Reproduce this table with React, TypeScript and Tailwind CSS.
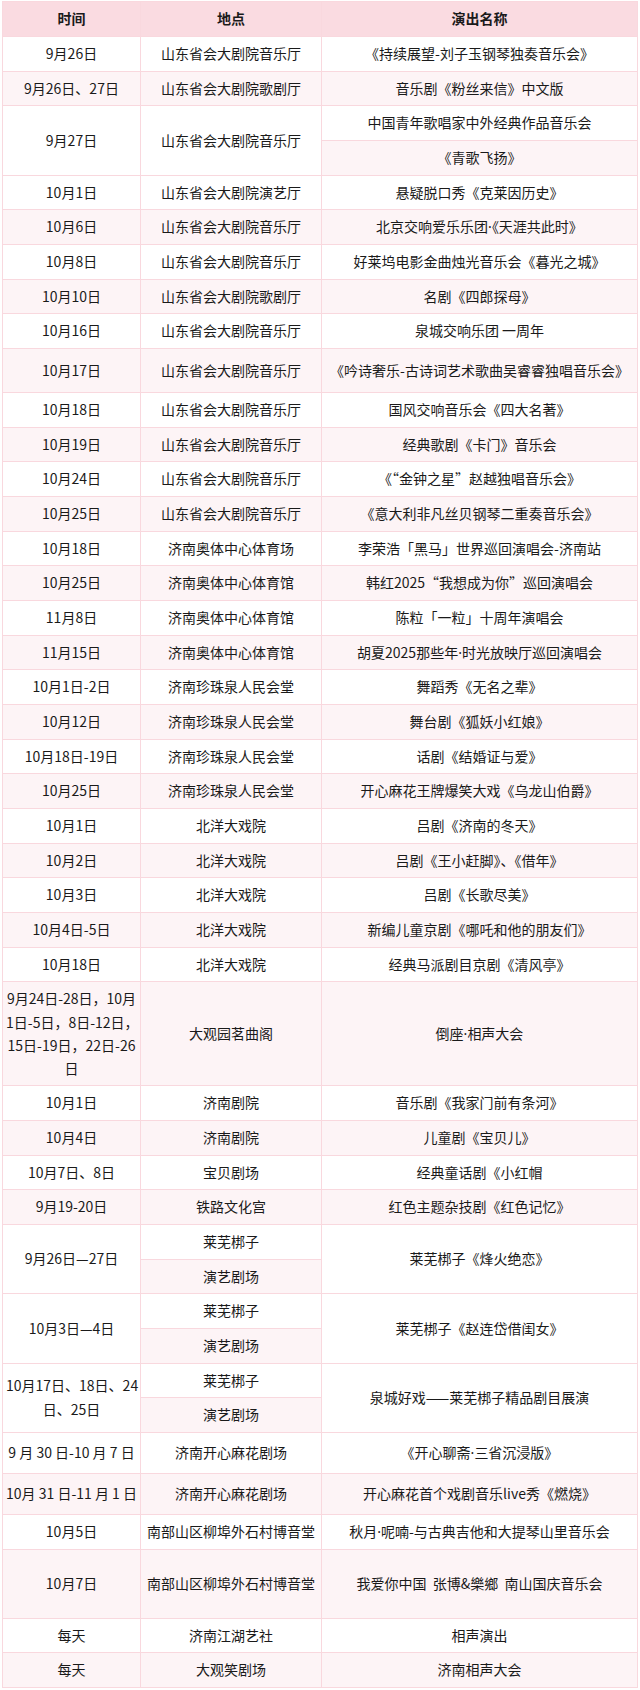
import React from "react";

type Row = {
  cells: { text: React.ReactNode; rowSpan?: number; nowrap?: boolean; tight?: boolean }[];
  h?: string;
};

const td = "border border-[#f9d8de] px-[3px] py-[5px] text-center align-middle";

// the middle dot is narrow in the original, CJK font draws it full width
function dot(s: string) {
  const parts = s.split("·");
  return parts.map((p, i) => (
    <React.Fragment key={i}>
      {i > 0 && <span className="font-['Noto_Sans',sans-serif]">·</span>}
      {p}
    </React.Fragment>
  ));
}

const rows: Row[] = [
  { cells: [{ text: "9月26日" }, { text: "山东省会大剧院音乐厅" }, { text: "《持续展望-刘子玉钢琴独奏音乐会》" }] },
  { cells: [{ text: "9月26日、27日" }, { text: "山东省会大剧院歌剧厅" }, { text: "音乐剧《粉丝来信》中文版" }] },
  { cells: [{ text: "9月27日", rowSpan: 2 }, { text: "山东省会大剧院音乐厅", rowSpan: 2 }, { text: "中国青年歌唱家中外经典作品音乐会" }] },
  { cells: [{ text: "《青歌飞扬》" }] },
  { cells: [{ text: "10月1日" }, { text: "山东省会大剧院演艺厅" }, { text: "悬疑脱口秀《克莱因历史》" }] },
  { cells: [{ text: "10月6日" }, { text: "山东省会大剧院音乐厅" }, { text: dot("北京交响爱乐乐团·《天涯共此时》") }] },
  { cells: [{ text: "10月8日" }, { text: "山东省会大剧院音乐厅" }, { text: "好莱坞电影金曲烛光音乐会《暮光之城》" }] },
  { cells: [{ text: "10月10日" }, { text: "山东省会大剧院歌剧厅" }, { text: "名剧《四郎探母》" }] },
  { cells: [{ text: "10月16日" }, { text: "山东省会大剧院音乐厅" }, { text: "泉城交响乐团 一周年" }] },
  { cells: [{ text: "10月17日" }, { text: "山东省会大剧院音乐厅" }, { text: "《吟诗奢乐-古诗词艺术歌曲吴睿睿独唱音乐会》", nowrap: true }], h: "h-[44px]" },
  { cells: [{ text: "10月18日" }, { text: "山东省会大剧院音乐厅" }, { text: "国风交响音乐会《四大名著》" }] },
  { cells: [{ text: "10月19日" }, { text: "山东省会大剧院音乐厅" }, { text: "经典歌剧《卡门》音乐会" }] },
  { cells: [{ text: "10月24日" }, { text: "山东省会大剧院音乐厅" }, { text: "《“金钟之星”赵越独唱音乐会》" }] },
  { cells: [{ text: "10月25日" }, { text: "山东省会大剧院音乐厅" }, { text: "《意大利非凡丝贝钢琴二重奏音乐会》" }] },
  { cells: [{ text: "10月18日" }, { text: "济南奥体中心体育场" }, { text: "李荣浩「黑马」世界巡回演唱会-济南站" }] },
  { cells: [{ text: "10月25日" }, { text: "济南奥体中心体育馆" }, { text: "韩红2025“我想成为你”巡回演唱会" }] },
  { cells: [{ text: "11月8日" }, { text: "济南奥体中心体育馆" }, { text: "陈粒「一粒」十周年演唱会" }] },
  { cells: [{ text: "11月15日" }, { text: "济南奥体中心体育馆" }, { text: dot("胡夏2025那些年·时光放映厅巡回演唱会") }] },
  { cells: [{ text: "10月1日-2日" }, { text: "济南珍珠泉人民会堂" }, { text: "舞蹈秀《无名之辈》" }] },
  { cells: [{ text: "10月12日" }, { text: "济南珍珠泉人民会堂" }, { text: "舞台剧《狐妖小红娘》" }] },
  { cells: [{ text: "10月18日-19日" }, { text: "济南珍珠泉人民会堂" }, { text: "话剧《结婚证与爱》" }] },
  { cells: [{ text: "10月25日" }, { text: "济南珍珠泉人民会堂" }, { text: "开心麻花王牌爆笑大戏《乌龙山伯爵》" }] },
  { cells: [{ text: "10月1日" }, { text: "北洋大戏院" }, { text: "吕剧《济南的冬天》" }] },
  { cells: [{ text: "10月2日" }, { text: "北洋大戏院" }, { text: "吕剧《王小赶脚》、《借年》" }] },
  { cells: [{ text: "10月3日" }, { text: "北洋大戏院" }, { text: "吕剧《长歌尽美》" }] },
  { cells: [{ text: "10月4日-5日" }, { text: "北洋大戏院" }, { text: "新编儿童京剧《哪吒和他的朋友们》" }] },
  { cells: [{ text: "10月18日" }, { text: "北洋大戏院" }, { text: "经典马派剧目京剧《清风亭》" }] },
  {
    cells: [
      {
        text: (
          <>
            9月24日-28日，10月
            <br />
            1日-5日，8日-12日，
            <br />
            15日-19日，22日-26
            <br />日
          </>
        ),
        nowrap: true,
        tight: true,
      },
      { text: "大观园茗曲阁" },
      { text: dot("倒座·相声大会") },
    ],
  },
  { cells: [{ text: "10月1日" }, { text: "济南剧院" }, { text: "音乐剧《我家门前有条河》" }] },
  { cells: [{ text: "10月4日" }, { text: "济南剧院" }, { text: "儿童剧《宝贝儿》" }] },
  { cells: [{ text: "10月7日、8日" }, { text: "宝贝剧场" }, { text: "经典童话剧《小红帽" }] },
  { cells: [{ text: "9月19-20日" }, { text: "铁路文化宫" }, { text: "红色主题杂技剧《红色记忆》" }] },
  { cells: [{ text: "9月26日—27日", rowSpan: 2 }, { text: "莱芜梆子" }, { text: "莱芜梆子《烽火绝恋》", rowSpan: 2 }] },
  { cells: [{ text: "演艺剧场" }] },
  { cells: [{ text: "10月3日—4日", rowSpan: 2 }, { text: "莱芜梆子" }, { text: "莱芜梆子《赵连岱借闺女》", rowSpan: 2 }] },
  { cells: [{ text: "演艺剧场" }] },
  {
    cells: [
      {
        text: (
          <>
            10月17日、18日、24
            <br />
            日、25日
          </>
        ),
        rowSpan: 2,
        nowrap: true,
      },
      { text: "莱芜梆子" },
      { text: "泉城好戏——莱芜梆子精品剧目展演", rowSpan: 2 },
    ],
  },
  { cells: [{ text: "演艺剧场" }] },
  { cells: [{ text: "9 月 30 日-10 月 7 日", nowrap: true }, { text: "济南开心麻花剧场" }, { text: dot("《开心聊斋·三省沉浸版》") }], h: "h-[41px]" },
  { cells: [{ text: "10月 31 日-11 月 1 日", nowrap: true }, { text: "济南开心麻花剧场" }, { text: "开心麻花首个戏剧音乐live秀《燃烧》" }], h: "h-[41px]" },
  { cells: [{ text: "10月5日" }, { text: "南部山区柳埠外石村博音堂", nowrap: true }, { text: dot("秋月·呢喃-与古典吉他和大提琴山里音乐会"), nowrap: true }] },
  {
    cells: [
      { text: "10月7日" },
      { text: "南部山区柳埠外石村博音堂", nowrap: true },
      { text: "我爱你中国\u00a0\u00a0张博&樂鄉\u00a0\u00a0南山国庆音乐会", nowrap: true },
    ],
    h: "h-[69px]",
  },
  { cells: [{ text: "每天" }, { text: "济南江湖艺社" }, { text: "相声演出" }] },
  { cells: [{ text: "每天" }, { text: "大观笑剧场" }, { text: "济南相声大会" }] },
];

export default function App() {
  return (
    <div className="w-[640px] min-h-[1690px] bg-white pl-[2px] pt-[1px] font-['Noto_Sans_CJK_SC','Noto_Sans',sans-serif] text-[14px] text-[#1a1a1a]">
      <table className="w-[635px] table-fixed border-collapse">
        <colgroup>
          <col className="w-[138px]" />
          <col className="w-[181px]" />
          <col className="w-[316px]" />
        </colgroup>
        <thead>
          <tr className="h-[35px] bg-[#fadbe1]">
            <th className={`${td} leading-[23.67px] font-bold`}>时间</th>
            <th className={`${td} leading-[23.67px] font-bold`}>地点</th>
            <th className={`${td} leading-[23.67px] font-bold`}>演出名称</th>
          </tr>
        </thead>
        <tbody>
          {rows.map((r, i) => (
            <tr
              key={i}
              className={`${r.h ?? ""} ${i % 2 === 1 ? "bg-[#fdf4f6]" : "bg-white"}`}
            >
              {r.cells.map((c, j) => (
                <td
                  key={j}
                  rowSpan={c.rowSpan}
                  className={`${td} ${c.tight ? "leading-[23.2px]" : "leading-[23.67px]"} ${c.nowrap ? "whitespace-nowrap" : ""}`}
                >
                  {c.text}
                </td>
              ))}
            </tr>
          ))}
        </tbody>
      </table>
    </div>
  );
}
